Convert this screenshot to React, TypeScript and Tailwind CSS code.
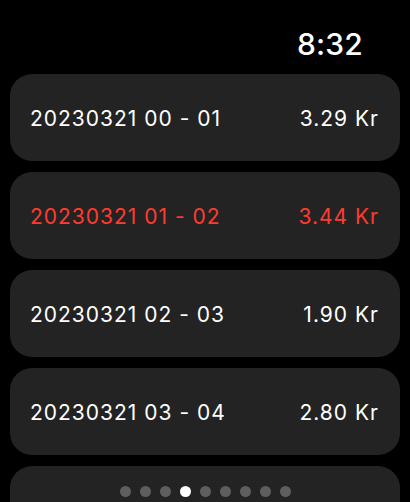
import React from "react";

const rows = [
  { label: "20230321 00 - 01", price: "3.29 Kr", red: false },
  { label: "20230321 01 - 02", price: "3.44 Kr", red: true },
  { label: "20230321 02 - 03", price: "1.90 Kr", red: false },
  { label: "20230321 03 - 04", price: "2.80 Kr", red: false },
];

export default function App() {
  return (
    <div
      className="relative w-[410px] h-[502px] overflow-hidden bg-black text-white"
      style={{ fontFamily: "Inter, 'Noto Sans', sans-serif" }}
    >
      <div className="flex justify-end pr-[47px] pt-[27px] h-[74px]">
        <span className="text-[30px] leading-[34px] font-medium tracking-[0.2px]">8:32</span>
      </div>
      <div className="flex flex-col gap-[11px] px-[10px]">
        {rows.map((r) => (
          <div
            key={r.label}
            className={`flex items-center justify-between h-[87px] shrink-0 rounded-[22px] bg-[#232323] pl-[20px] pr-[21px] pt-[2px] text-[21px] tracking-[1px] ${
              r.red ? "text-[#ff3b30]" : "text-white"
            }`}
          >
            <span>{r.label}</span>
            <span>{r.price}</span>
          </div>
        ))}
        <div className="h-[87px] shrink-0 rounded-[22px] bg-[#232323]" />
      </div>
      <div className="absolute left-0 right-0 top-[486px] flex justify-center gap-[9px]">
        {Array.from({ length: 9 }).map((_, i) => (
          <div
            key={i}
            className={`w-[11px] h-[11px] rounded-full ${i === 3 ? "bg-white" : "bg-[#5e5e5e]"}`}
          />
        ))}
      </div>
    </div>
  );
}
